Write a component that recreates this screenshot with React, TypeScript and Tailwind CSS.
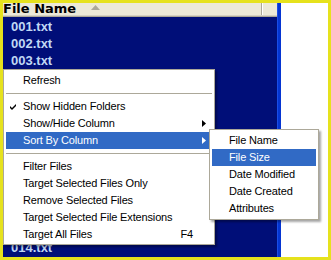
import { ReactNode } from "react"

const files = Array.from({ length: 14 }, (_, i) => String(i + 1).padStart(3, "0") + ".txt")

const Arrow = ({ white }: { white?: boolean }) => (
    <svg width="4" height="7" viewBox="0 0 4 7" className="absolute right-[6px] top-[5px]">
        <polygon points="0,0 4,3.5 0,7" fill={white ? "#ffffff" : "#000000"} />
    </svg>
)

const Check = () => (
    <svg width="7" height="7" viewBox="0 0 7 7" className="absolute left-[4px] top-[5px]">
        <polygon points="0,3 2,5 6,1 6,3 2,7 0,5" fill="#000000" />
    </svg>
)

interface ItemProps {
    label: string
    active?: boolean
    children?: ReactNode
}

const Item = ({ label, active, children }: ItemProps) => (
    <div
        className={`relative h-[17px] pl-[17px] leading-[17px] ${active ? "bg-[#316ac5] text-white" : "text-black"}`}
    >
        {label}
        {children}
    </div>
)

const Separator = () => (
    <div className="flex h-[9px] items-center">
        <div className="h-px w-full bg-[#aca899]" />
    </div>
)

export default function App() {
    return (
        <div className="relative h-[260px] w-[331px] overflow-hidden bg-[#e6e21d] p-[3px] font-['Liberation_Sans',Arial,sans-serif]">
            <div className="flex h-full">
                <div className="flex w-[274px] flex-col overflow-hidden">
                    <div className="flex h-[14px] shrink-0 flex-col bg-[#ece9d8]">
                        <div className="flex h-[12px]">
                            <div className="flex w-[258px] items-start">
                                <span className="font-['DejaVu_Sans',Verdana,sans-serif] text-[13px] font-bold leading-[12px] text-black">
                                    File Name
                                </span>
                                <svg width="9" height="5" viewBox="0 0 9 5" className="ml-[15px] mt-[2px]">
                                    <polygon points="4.5,0 9,5 0,5" fill="#aca899" />
                                </svg>
                            </div>
                            <div className="w-px bg-[#aca899]" />
                            <div className="w-px bg-white" />
                        </div>
                        <div className="h-px bg-[#d6d2c2]" />
                        <div className="h-px bg-[#aca899]" />
                    </div>
                    <div className="flex-1 bg-[#000e78]">
                        {files.map((f) => (
                            <div key={f} className="h-[17px] pl-[8px] text-[13px] font-bold leading-[19px] text-[#c0d8f4]">
                                {f}
                            </div>
                        ))}
                    </div>
                </div>
                <div className="flex w-[4px]">
                    <div className="w-[1px] bg-[#1a4de6]" />
                    <div className="w-[3px] bg-[#0435d2]" />
                </div>
                <div className="flex-1 bg-white" />
            </div>

            <div className="absolute left-[3px] top-[69px] w-[212px] border border-[#aca899] bg-white px-[2px] pb-[1px] pt-[2px] text-[11px] tracking-[-0.15px] shadow-[2px_2px_2px_rgba(0,0,0,0.35)]">
                <Item label="Refresh" />
                <Separator />
                <Item label="Show Hidden Folders">
                    <Check />
                </Item>
                <Item label="Show/Hide Column">
                    <Arrow />
                </Item>
                <Item label="Sort By Column" active>
                    <Arrow white />
                </Item>
                <Separator />
                <Item label="Filter Files" />
                <Item label="Target Selected Files Only" />
                <Item label="Remove Selected Files" />
                <Item label="Target Selected File Extensions" />
                <Item label="Target All Files">
                    <span className="absolute right-[19px] top-0">F4</span>
                </Item>
            </div>

            <div className="absolute left-[209px] top-[129px] w-[110px] border border-[#aca899] bg-white p-[2px] text-[11px] tracking-[-0.15px] shadow-[2px_2px_2px_rgba(0,0,0,0.35)]">
                <Item label="File Name" />
                <Item label="File Size" active />
                <Item label="Date Modified" />
                <Item label="Date Created" />
                <Item label="Attributes" />
            </div>
        </div>
    )
}
